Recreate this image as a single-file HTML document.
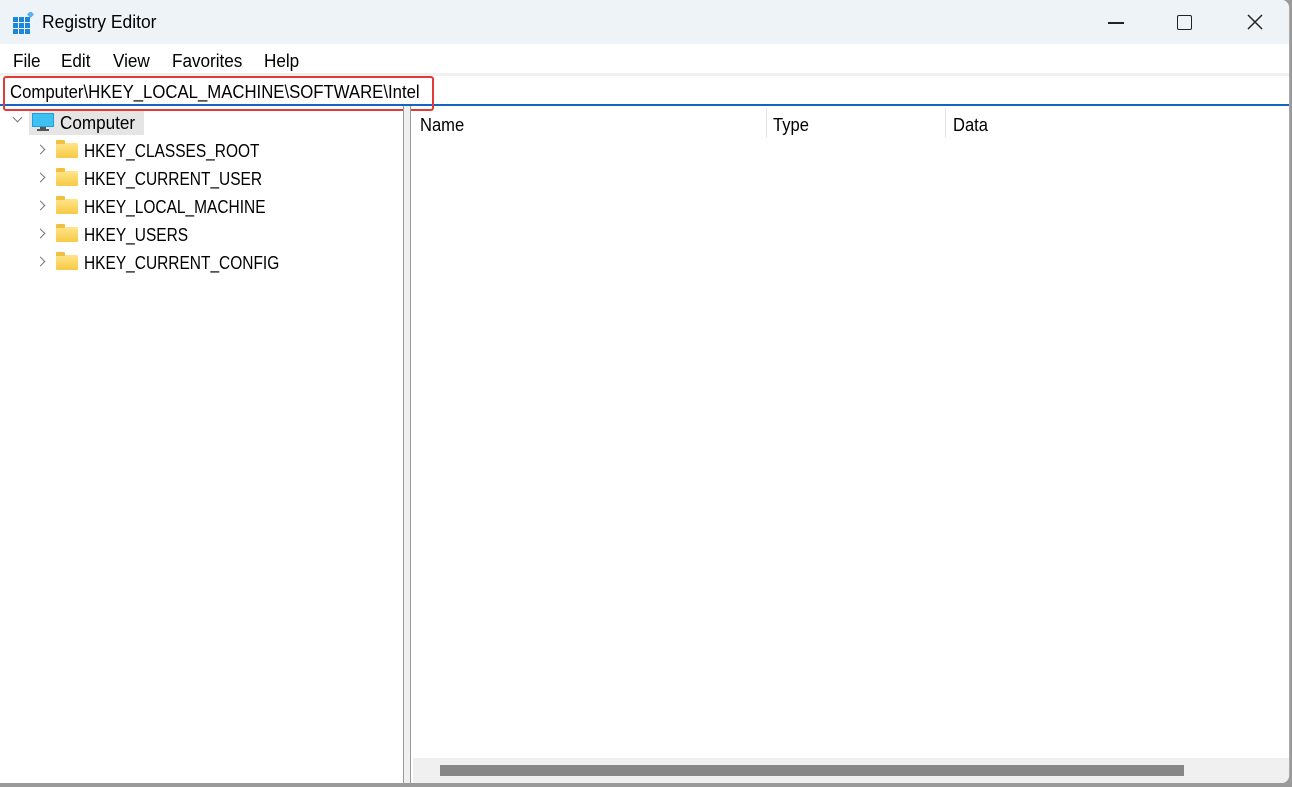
<!DOCTYPE html>
<html><head><style>
body{margin:0;width:1292px;height:787px;overflow:hidden;background:#9a9a9a;font-family:"Liberation Sans",sans-serif;position:relative}
.win{position:absolute;left:0;top:0;width:1289px;height:783px;background:#fff;border-radius:0 8px 8px 0;overflow:hidden;border-right:1px solid #aaa}
.title{position:absolute;left:0;top:0;width:100%;height:44px;background:#eef3f7}
.t{position:absolute;font-size:18px;color:#000;white-space:nowrap;transform-origin:left center}
.menu span{position:absolute;top:51px;font-size:18px;transform:scaleX(.95);transform-origin:left center}
.gap{position:absolute;left:0;top:73px;width:100%;height:4px;background:#f0f0f0}
.addr{position:absolute;left:0;top:76px;width:100%;height:28px;background:#fff;border-bottom:2px solid #1565c0}
.red{position:absolute;left:3px;top:76px;width:427px;height:31px;border:2px solid #e53935;border-radius:3px}
.tree span{position:absolute;font-size:18px;white-space:nowrap;transform:scaleX(.86);transform-origin:left center}
.folder{position:absolute;width:22px;height:15px;background:linear-gradient(#ffe58a,#f7c945);border-radius:1px}
.folder:before{content:"";position:absolute;left:0;top:-3px;width:9px;height:4px;background:#f0c040;border-radius:1px 1px 0 0}
.chev{position:absolute;width:6px;height:6px;border-right:1.5px solid #777;border-top:1.5px solid #777;transform:rotate(45deg)}
</style></head><body>
<div class="win">
<div class="title"></div>
<svg style="position:absolute;left:13px;top:12px" width="22" height="22" viewBox="0 0 22 22">
<g fill="#1e88d8"><rect x="0" y="5" width="5" height="5"/><rect x="6" y="5" width="5" height="5"/><rect x="12" y="5" width="5" height="5"/><rect x="0" y="11" width="5" height="5"/><rect x="6" y="11" width="5" height="5"/><rect x="12" y="11" width="5" height="5"/><rect x="0" y="17" width="5" height="5"/><rect x="6" y="17" width="5" height="5"/><rect x="12" y="17" width="5" height="5"/></g>
<rect x="15" y="0" width="5" height="5" fill="#5ab0ee" transform="rotate(45 17.5 2.5)"/></svg>
<div class="t" style="left:42px;top:12px;transform:scaleX(.97)">Registry Editor</div>
<div style="position:absolute;left:1108px;top:22px;width:16px;height:1.5px;background:#222"></div>
<div style="position:absolute;left:1177px;top:15px;width:13px;height:13px;border:1.5px solid #222;border-radius:2px"></div>
<svg style="position:absolute;left:1247px;top:14px" width="16" height="16"><path d="M1 1L15 15M15 1L1 15" stroke="#222" stroke-width="1.5"/></svg>
<div class="menu"><span style="left:13px">File</span><span style="left:61px">Edit</span><span style="left:113px">View</span><span style="left:172px">Favorites</span><span style="left:264px">Help</span></div>
<div class="gap"></div>
<div class="addr"></div>
<div class="t" style="left:10px;top:82px;transform:scaleX(.93)">Computer\HKEY_LOCAL_MACHINE\SOFTWARE\Intel</div>
<div class="red"></div>
<div style="position:absolute;left:403px;top:106px;width:6px;height:680px;background:#f0f0f0;border-left:1px solid #999;border-right:1px solid #999"></div>
<div style="position:absolute;left:0;top:106px;width:3px;height:680px;background:#fff"></div>
<div class="tree">
<div class="chev" style="left:14px;top:114px;transform:rotate(135deg)"></div>
<div style="position:absolute;left:29px;top:111px;width:115px;height:24px;background:#e5e5e5"></div>
<svg style="position:absolute;left:32px;top:112px" width="22" height="20"><rect x="0" y="1" width="22" height="14" fill="#1ea0e0"/><rect x="1" y="2" width="20" height="12" fill="#40c0f0"/><rect x="8" y="15" width="6" height="2" fill="#555"/><rect x="5" y="17" width="12" height="2" fill="#555"/></svg>
<span style="left:60px;top:113px;transform:scaleX(.95)">Computer</span>
<div class="chev" style="left:37px;top:146px"></div><div class="folder" style="left:56px;top:143px"></div><span style="left:84px;top:141px">HKEY_CLASSES_ROOT</span>
<div class="chev" style="left:37px;top:174px"></div><div class="folder" style="left:56px;top:171px"></div><span style="left:84px;top:169px">HKEY_CURRENT_USER</span>
<div class="chev" style="left:37px;top:202px"></div><div class="folder" style="left:56px;top:199px"></div><span style="left:84px;top:197px">HKEY_LOCAL_MACHINE</span>
<div class="chev" style="left:37px;top:230px"></div><div class="folder" style="left:56px;top:227px"></div><span style="left:84px;top:225px">HKEY_USERS</span>
<div class="chev" style="left:37px;top:258px"></div><div class="folder" style="left:56px;top:255px"></div><span style="left:84px;top:253px">HKEY_CURRENT_CONFIG</span>
</div>
<div class="t" style="left:420px;top:115px;transform:scaleX(.92)">Name</div>
<div style="position:absolute;left:766px;top:108px;width:1px;height:30px;background:#e5e5e5"></div>
<div class="t" style="left:773px;top:115px;transform:scaleX(.92)">Type</div>
<div style="position:absolute;left:945px;top:108px;width:1px;height:30px;background:#e5e5e5"></div>
<div class="t" style="left:953px;top:115px;transform:scaleX(.92)">Data</div>
<div style="position:absolute;left:413px;top:758px;width:876px;height:25px;background:#f0f0f0"></div>
<div style="position:absolute;left:440px;top:765px;width:744px;height:11px;background:#878787"></div>
</div>
</body></html>
